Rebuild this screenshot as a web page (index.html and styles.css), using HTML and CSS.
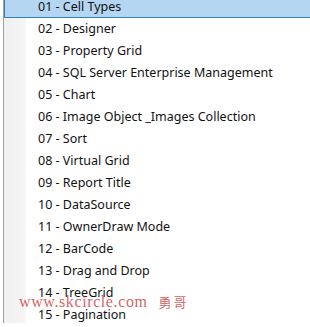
FILE: index.html
```html
<!DOCTYPE html>
<html lang="en">
<head>
    <meta charset="UTF-8">
    <title>Demo List</title>
    <link rel="stylesheet" href="styles.css">
</head>
<body>
    <div class="panel">
        <ul class="demo-list">
            <li class="item selected">01 - Cell Types</li>
            <li class="item">02 - Designer</li>
            <li class="item">03 - Property Grid</li>
            <li class="item">04 - SQL Server Enterprise Management</li>
            <li class="item">05 - Chart</li>
            <li class="item">06 - Image Object _Images Collection</li>
            <li class="item">07 - Sort</li>
            <li class="item">08 - Virtual Grid</li>
            <li class="item">09 - Report Title</li>
            <li class="item">10 - DataSource</li>
            <li class="item">11 - OwnerDraw Mode</li>
            <li class="item">12 - BarCode</li>
            <li class="item">13 - Drag and Drop</li>
            <li class="item">14 - TreeGrid</li>
            <li class="item">15 - Pagination</li>
        </ul>
        <div class="watermark">www.skcircle.com<span class="watermark-cn">勇哥</span></div>
    </div>
</body>
</html>
```

FILE: styles.css
```css
body {
    margin: 0;
    background: #fff;
    font-family: 'Noto Sans', sans-serif;
    overflow: hidden;
}
.panel {
    position: relative;
    margin-left: 3px;
    height: 327px;
    border-left: 1px solid #a0a0a0;
    background: linear-gradient(to right, #f1f1f1 0, #f4f4f4 20px, #fff 23px);
}
.demo-list {
    list-style: none;
    margin: -4px 0 0 0;
    padding: 0;
}
.item {
    height: 22px;
    line-height: 22px;
    padding-left: 34px;
    font-size: 12.5px;
    color: #111;
    white-space: nowrap;
    box-sizing: border-box;
}
.item.selected {
    background-color: #b5d6f2;
    border-left: 1px solid #2e82c2;
    border-bottom: 1px solid #2e82c2;
    padding-left: 33px;
    line-height: 21px;
}
.watermark {
    position: absolute;
    left: 15px;
    top: 296px;
    font-family: 'Liberation Serif', serif;
    font-size: 16px;
    letter-spacing: 0.6px;
    color: rgba(205, 40, 40, 0.75);
}
.watermark-cn {
    font-family: 'Noto Sans CJK SC', sans-serif;
    font-size: 13px;
    letter-spacing: 2px;
    margin-left: 11px;
}
```
